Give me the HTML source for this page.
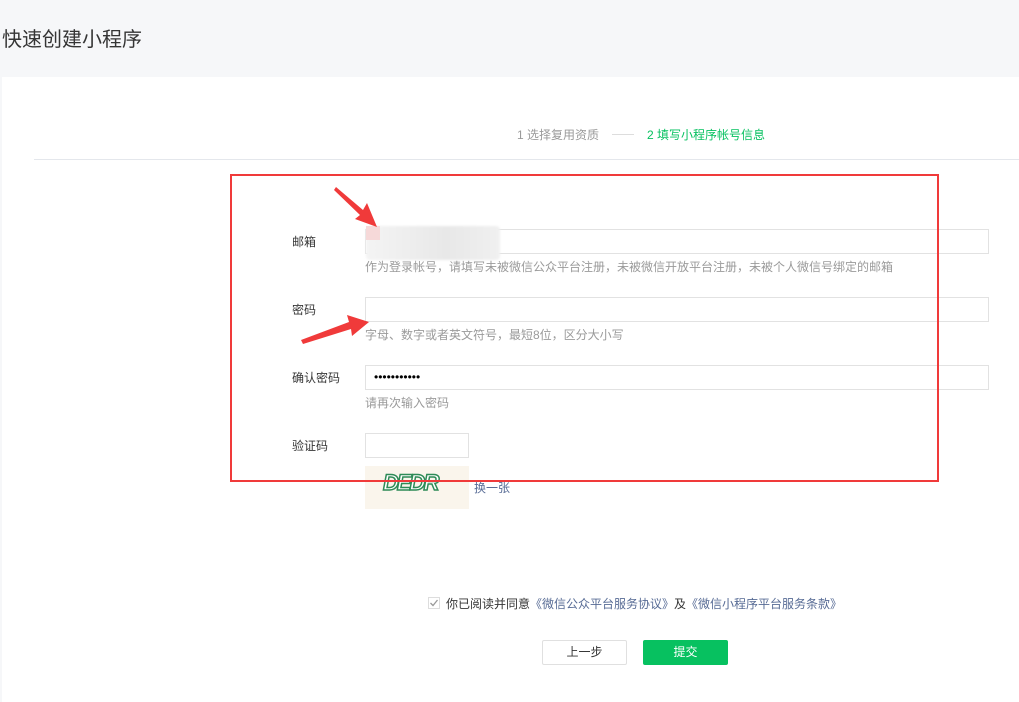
<!DOCTYPE html>
<html><head><meta charset="utf-8"><style>
*{margin:0;padding:0;box-sizing:border-box}
body{width:1019px;height:702px;overflow:hidden;background:#f6f7f9;font-family:"Liberation Sans","Noto Sans CJK SC",sans-serif;position:relative;color:#353535}
.a{position:absolute}
.t{font-size:20px;left:2px;top:23px;color:#353535}
.main{left:2px;top:77px;width:1017px;height:625px;background:#fff}
.lbl{font-size:12px;left:292px;color:#353535}
.inp{position:absolute;left:365px;width:624px;height:25px;border:1px solid #e2e2e2;background:#fff}
.hint{font-size:12px;left:365px;color:#9a9a9a}
</style></head><body>
<div class="a t">快速创建小程序</div>
<div class="a main"></div>
<div class="a" style="left:517px;top:126px;font-size:12px;color:#9a9a9a">1 选择复用资质</div>
<div class="a" style="left:612px;top:134px;width:22px;height:1px;background:#ddd"></div>
<div class="a" style="left:647px;top:126px;font-size:12px;color:#07c160">2 填写小程序帐号信息</div>
<div class="a" style="left:34px;top:159px;width:985px;height:1px;background:#e4e7ec"></div>

<div class="a lbl" style="top:233px">邮箱</div>
<div class="inp" style="top:229px"></div>
<div class="a" style="left:366px;top:226px;width:134px;height:34px;background:linear-gradient(90deg,#f4f4f4,#e8e8e8 60%,#f0f0f0);border-radius:4px;filter:blur(1px)"></div>
<div class="a" style="left:366px;top:226px;width:14px;height:14px;background:#f6d9d9"></div>
<div class="a hint" style="top:258px">作为登录帐号，请填写未被微信公众平台注册，未被微信开放平台注册，未被个人微信号绑定的邮箱</div>

<div class="a lbl" style="top:301px">密码</div>
<div class="inp" style="top:297px"></div>
<div class="a hint" style="top:326px">字母、数字或者英文符号，最短8位，区分大小写</div>

<div class="a lbl" style="top:369px">确认密码</div>
<div class="inp" style="top:365px;padding-left:8px;font-size:12px;line-height:22px;color:#000">•••••••••••</div>
<div class="a hint" style="top:394px">请再次输入密码</div>

<div class="a lbl" style="top:437px">验证码</div>
<div class="inp" style="top:433px;width:104px"></div>
<div class="a" style="left:365px;top:466px;width:104px;height:43px;background:#faf5ec"></div>
<div class="a" style="left:383px;top:470px;font-size:22px;font-weight:bold;color:#fff;-webkit-text-stroke:1.5px #2e8b57;letter-spacing:-2px;font-style:italic">DEDR</div>
<div class="a" style="left:474px;top:479px;font-size:12px;color:#576b95">换一张</div>

<div class="a" style="left:230px;top:174px;width:709px;height:308px;border:2px solid #f03a3a"></div>

<svg class="a" style="left:0;top:0" width="1019" height="702">
<polygon points="336,187 363,210 367,203 377,227 355,219 360,215 334,190" fill="#f03a3a"/>
<polygon points="301,340 349,322 347,315 369,322 352,336 351,329 303,344" fill="#f03a3a"/>
<rect x="428.5" y="597.5" width="11" height="11" fill="#fff" stroke="#ddd"/>
<path d="M430.5 603 L433 605.5 L437.5 600" stroke="#999" stroke-width="1.3" fill="none"/>
</svg>
<div class="a" style="left:446px;top:595px;font-size:12px;color:#353535">你已阅读并同意<span style="color:#576b95">《微信公众平台服务协议》</span>及<span style="color:#576b95">《微信小程序平台服务条款》</span></div>

<div class="a" style="left:542px;top:640px;width:85px;height:25px;border:1px solid #e0e0e0;border-radius:2px;background:#fff;font-size:12px;text-align:center;line-height:23px">上一步</div>
<div class="a" style="left:643px;top:640px;width:85px;height:25px;border-radius:2px;background:#07c160;color:#fff;font-size:12px;text-align:center;line-height:25px">提交</div>
</body></html>
